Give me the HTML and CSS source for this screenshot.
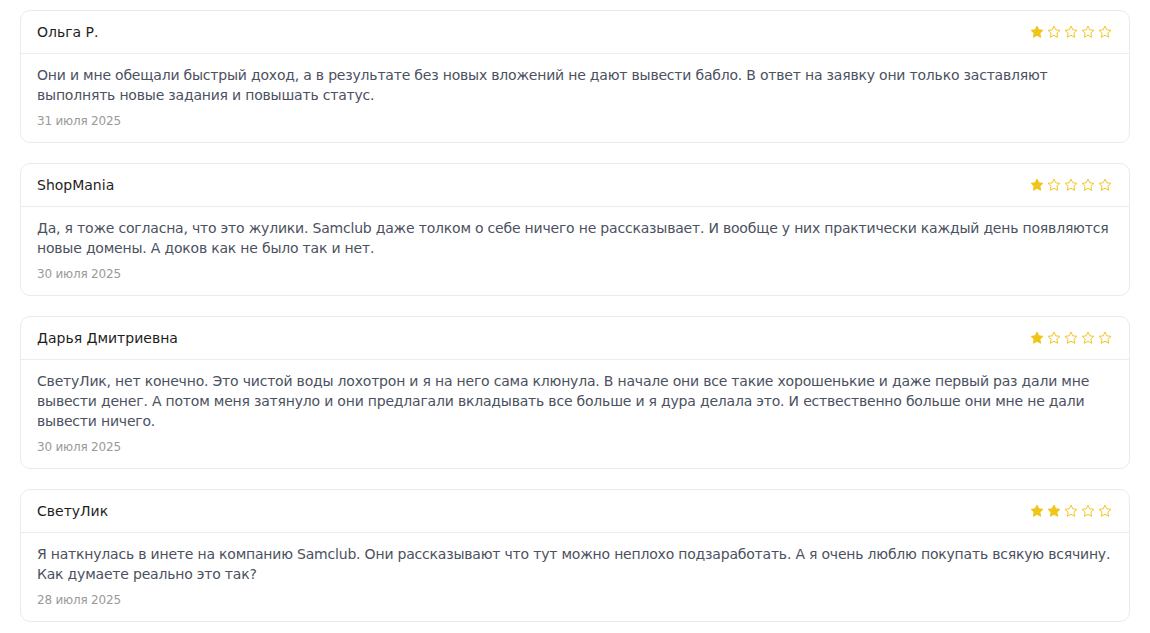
FILE: index.html
```html
<!DOCTYPE html>
<html lang="ru">
<head>
    <meta charset="UTF-8">
    <meta name="viewport" content="width=device-width, initial-scale=1.0">
    <title>Отзывы</title>
    <link rel="stylesheet" href="styles.css">
</head>
<body>
    <svg width="0" height="0" class="defs">
        <defs>
            <path id="star" d="M8 1.2l2.05 4.3 4.7.6-3.45 3.25.88 4.65L8 11.75 3.82 14l.88-4.65L1.25 6.1l4.7-.6z"/>
        </defs>
    </svg>

    <div class="reviews">
        <div class="review">
            <div class="review-head">
                <span class="author">Ольга Р.</span>
                <div class="stars" data-rating="1"></div>
            </div>
            <div class="review-body">
                <p class="text">Они и мне обещали быстрый доход, а в результате без новых вложений не дают вывести бабло. В ответ на заявку они только заставляют выполнять новые задания и повышать статус.</p>
                <div class="date">31 июля 2025</div>
            </div>
        </div>

        <div class="review">
            <div class="review-head">
                <span class="author">ShopMania</span>
                <div class="stars" data-rating="1"></div>
            </div>
            <div class="review-body">
                <p class="text">Да, я тоже согласна, что это жулики. Samclub даже толком о себе ничего не рассказывает. И вообще у них практически каждый день появляются новые домены. А доков как не было так и нет.</p>
                <div class="date">30 июля 2025</div>
            </div>
        </div>

        <div class="review">
            <div class="review-head">
                <span class="author">Дарья Дмитриевна</span>
                <div class="stars" data-rating="1"></div>
            </div>
            <div class="review-body">
                <p class="text">СветуЛик, нет конечно. Это чистой воды лохотрон и я на него сама клюнула. В начале они все такие хорошенькие и даже первый раз дали мне вывести денег. А потом меня затянуло и они предлагали вкладывать все больше и я дура делала это. И ествественно больше они мне не дали вывести ничего.</p>
                <div class="date">30 июля 2025</div>
            </div>
        </div>

        <div class="review">
            <div class="review-head">
                <span class="author">СветуЛик</span>
                <div class="stars" data-rating="2"></div>
            </div>
            <div class="review-body">
                <p class="text">Я наткнулась в инете на компанию Samclub. Они рассказывают что тут можно неплохо подзаработать. А я очень люблю покупать всякую всячину. Как думаете реально это так?</p>
                <div class="date">28 июля 2025</div>
            </div>
        </div>
    </div>

    <script>
        // fill each rating block with 5 stars
        document.querySelectorAll('.stars').forEach(box => {
            const rating = Number(box.dataset.rating);
            for (let i = 0; i < 5; i++) {
                const cls = i < rating ? 'star full' : 'star';
                box.insertAdjacentHTML('beforeend',
                    `<svg class="${cls}" viewBox="0 0 16 16"><use href="#star"/></svg>`);
            }
        });
    </script>
</body>
</html>
```

FILE: styles.css
```css
html, body {
    margin: 0;
    padding: 0;
    background: #fff;
    font-family: 'DejaVu Sans', sans-serif;
}

.defs {
    position: absolute;
}

.reviews {
    display: flex;
    flex-direction: column;
    gap: 20px;
    padding: 10px 20px;
}

.review {
    border: 1px solid #ebebeb;
    border-radius: 10px;
    background: #fff;
}

.review-head {
    display: flex;
    align-items: center;
    justify-content: space-between;
    height: 42px;
    padding: 0 16px;
    border-bottom: 1px solid #ececec;
}

.author {
    font-size: 14px;
    color: #1e1e1e;
}

.stars {
    display: flex;
    gap: 3px;
    padding-right: 1px;
}

.star {
    width: 14px;
    height: 14px;
    fill: none;
    stroke: #f0c419;
    stroke-width: 1.1;
    stroke-linejoin: round;
}

.star.full {
    fill: #f0c419;
}

.review-body {
    padding: 11px 16px 12px;
}

.text {
    margin: 0;
    font-size: 14px;
    line-height: 20px;
    letter-spacing: -0.2px;
    color: #4b5160;
}

.date {
    margin-top: 7px;
    font-size: 12px;
    line-height: 18px;
    letter-spacing: -0.2px;
    color: #9a9a9a;
}
```
